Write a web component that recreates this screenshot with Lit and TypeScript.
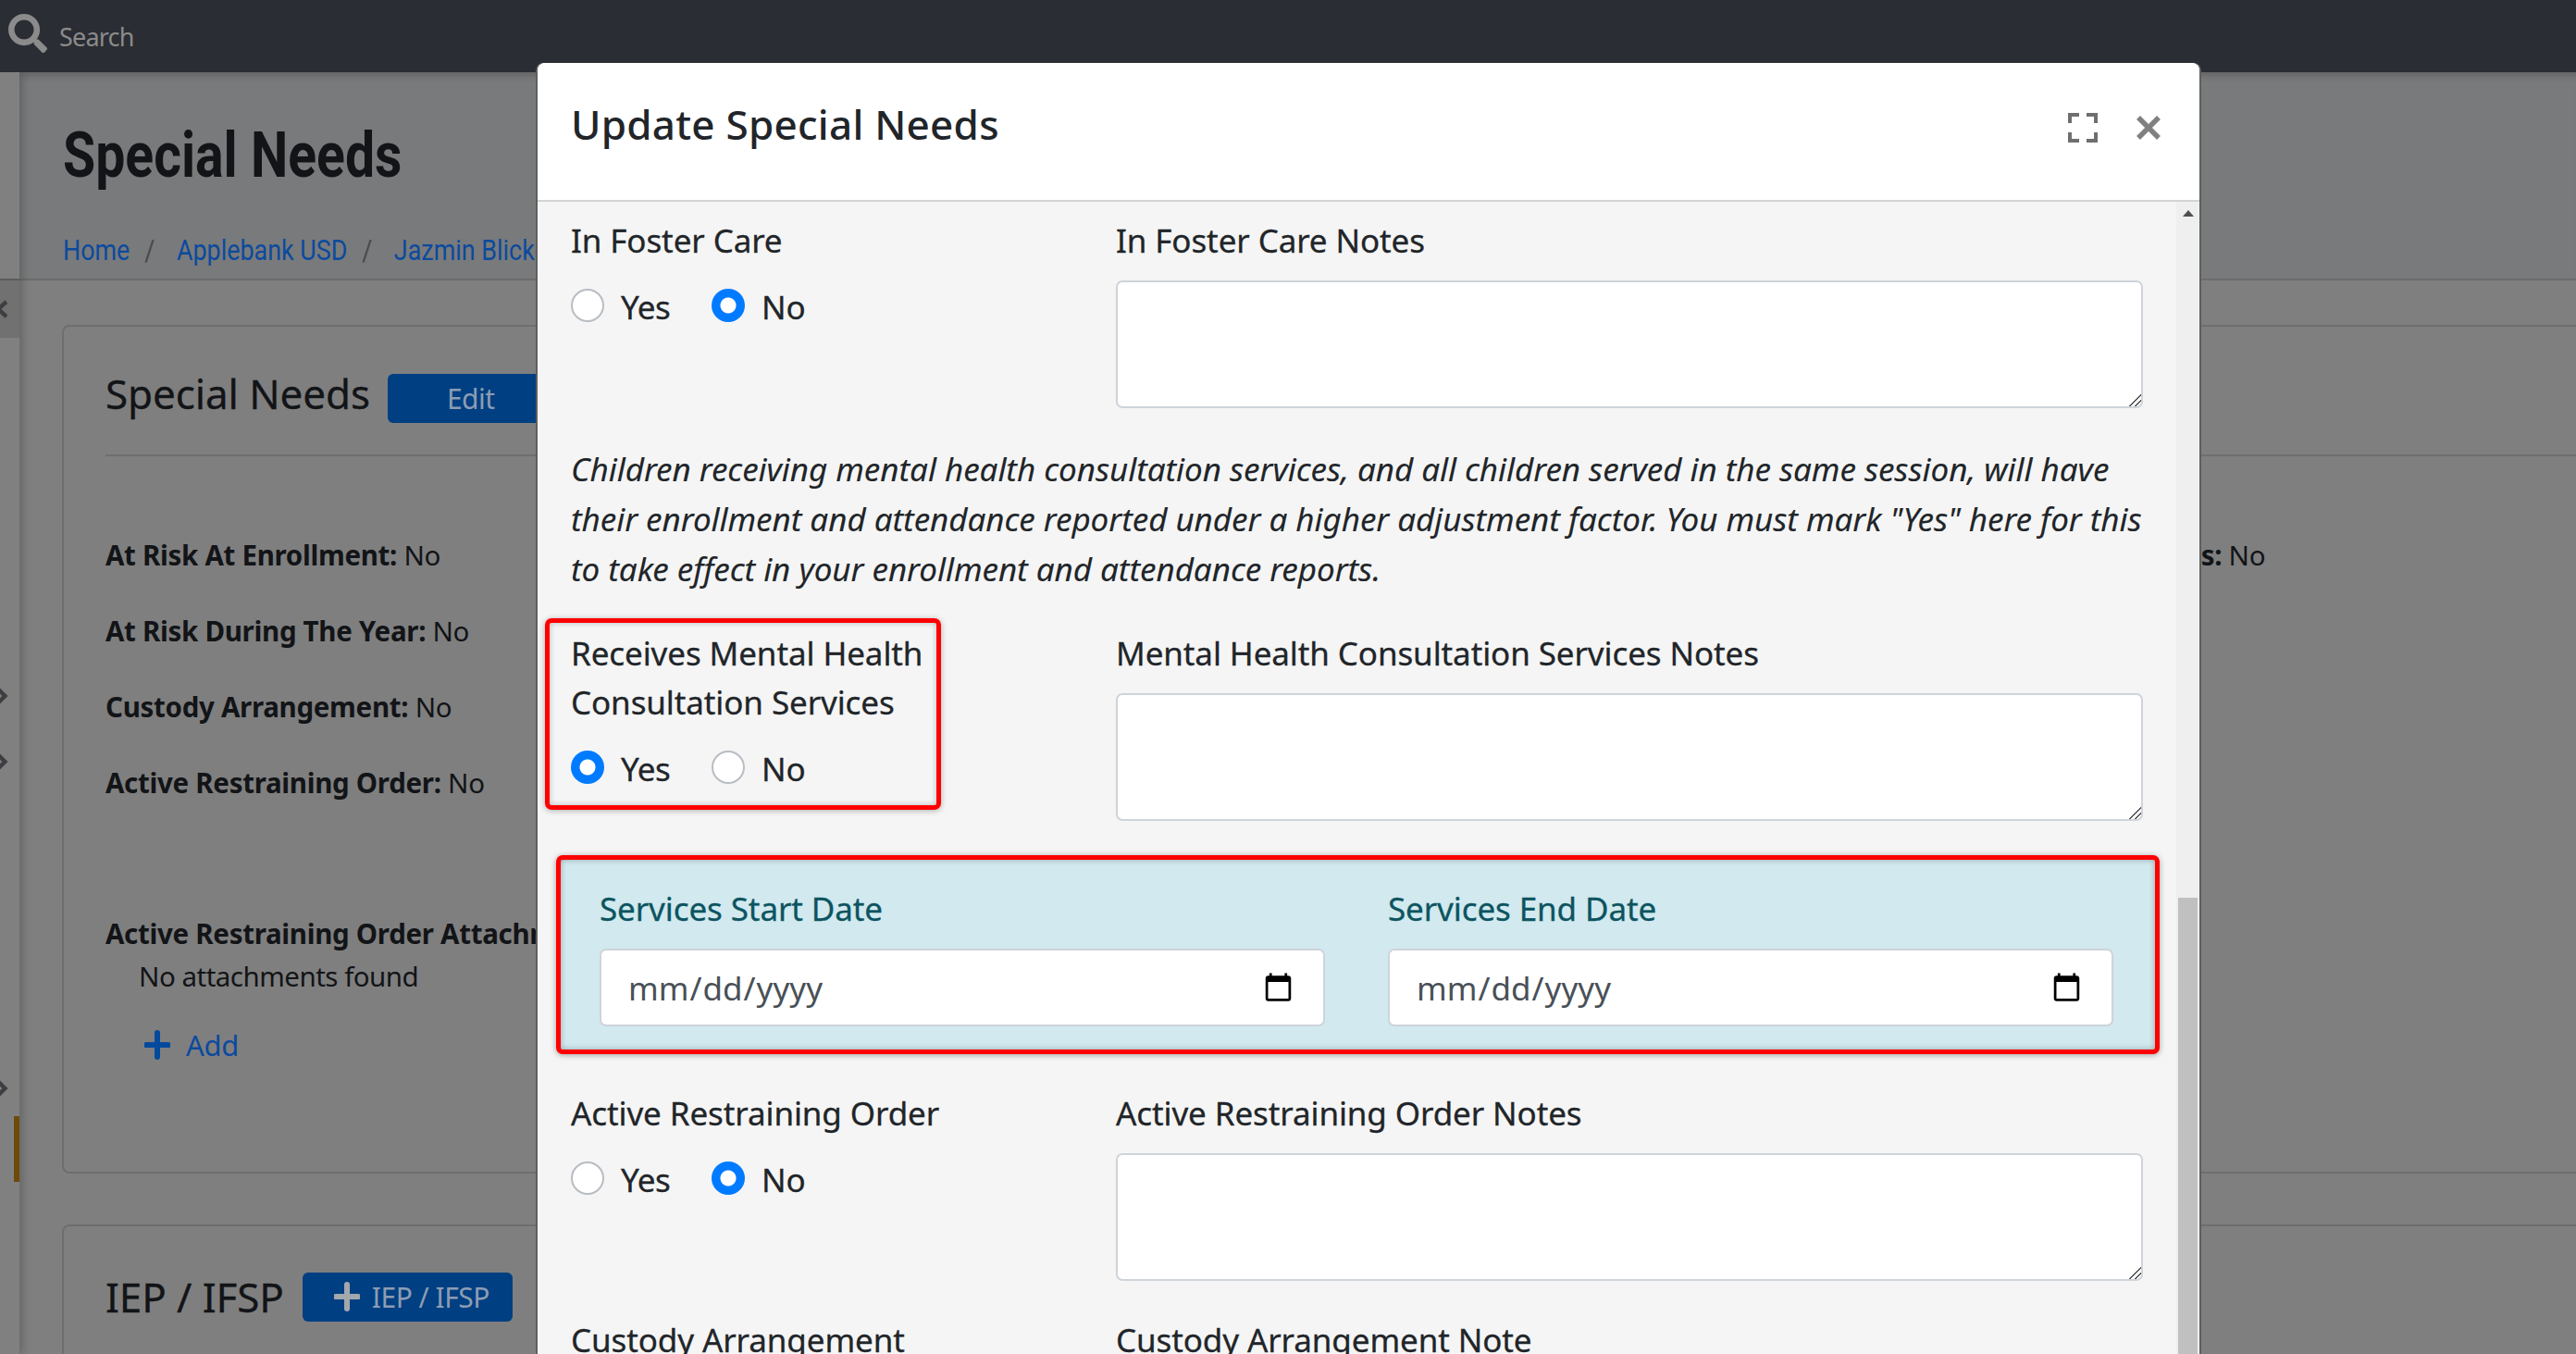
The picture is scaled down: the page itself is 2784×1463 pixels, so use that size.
import { LitElement, html, css } from "lit";
import { customElement } from "lit/decorators.js";

const plus = (cls: string) => html`<svg class=${cls} viewBox="0 0 28 32"><path d="M14 3v26M2 16h24" fill="none" stroke="currentColor" stroke-width="6" stroke-linecap="round"/></svg>`;
const chev = html`<svg class="chev" viewBox="0 0 10 26"><path d="M-4 3l10 10-10 10" fill="none" stroke="currentColor" stroke-width="5"/></svg>`;

@customElement("app-root")
export class AppRoot extends LitElement {
  static styles = css`
    :host { display: block; position: relative; width: 2784px; height: 1463px; overflow: hidden; background: #7f7f7f; font-family: "Noto Sans", sans-serif; color: #121417; }
    .topbar { height: 78px; background: #2a2d33; display: flex; align-items: center; color: #8b8b8b; position: relative; z-index: 1; }
    .search-ico { width: 42px; height: 42px; margin-left: 9px; margin-top: -7px; fill: #8b8b8b; }
    .search-txt { font-size: 27px; letter-spacing: -0.8px; margin-left: 13px; }
    .shell { display: flex; height: 1385px; }
    .rail { width: 21px; flex: none; background: #808080; box-shadow: 4px 0 8px rgba(0,0,0,.18); position: relative; display: flex; flex-direction: column; color: #3d3e42; }
    .rail-top { height: 225px; flex: none; border-bottom: 2px solid #5c5c5c; box-sizing: border-box; }
    .rail-x { height: 62px; flex: none; background: #717171; display: flex; align-items: center; }
    .rail-x svg { width: 8px; height: 22px; }
    .chev { width: 9px; height: 26px; display: block; }
    .c1 { margin-top: 374px; }
    .c2 { margin-top: 45px; }
    .c3 { margin-top: 327px; }
    .amber { width: 6px; height: 71px; margin-left: 15px; margin-top: 17px; background: #6d4a08; }
    .main { flex: 1; min-width: 0; }
    .band { height: 225px; box-sizing: border-box; background: #797a7b; border-bottom: 2px solid #6c6c6c; box-shadow: inset 0 10px 10px -8px rgba(0,0,0,.25); padding: 48px 0 0 47px; }
    h1 { margin: 0; font: 700 68px/84px Roboto, sans-serif; transform: scaleX(.84); transform-origin: left; white-space: nowrap; }
    .crumbs { display: flex; margin-top: 38px; font: 400 32px/44px Roboto, sans-serif; color: #0b4a9e; transform: scaleX(.84); transform-origin: left; white-space: nowrap; }
    .crumbs i { font-style: normal; color: #47484a; margin: 0 28px 0 19px; }
    .card { margin: 48px 0 0 46px; border: 2px solid #6e6e6e; border-right: 0; border-radius: 8px 0 0 8px; height: 917px; box-sizing: border-box; padding: 0 0 0 45px; }
    .card-head { display: flex; align-items: center; height: 140px; border-bottom: 2px solid #6e6e6e; box-sizing: border-box; }
    h2 { margin: 0; font-weight: 400; font-size: 44px; letter-spacing: -0.1px; white-space: nowrap; -webkit-text-stroke: .3px; }
    .card-head h2 { margin-top: 5px; }
    .btn { background: #003f82; color: #8c9db3; border-radius: 6px; display: flex; align-items: center; height: 53px; box-sizing: border-box; font-size: 30px; letter-spacing: -0.5px; }
    .btn-edit { margin-left: 19px; width: 300px; padding-left: 64px; margin-top: 17px; }
    .stats { display: grid; grid-template-columns: 1fr 700px; padding-top: 66px; margin-right: 348px; }
    .stat { font-size: 29.5px; line-height: 82px; height: 82px; letter-spacing: -0.3px; white-space: nowrap; }
    .stat b { font-weight: 700; }
    .stat-r { text-align: right; }
    .attach { margin-top: 99px; font-size: 29.5px; letter-spacing: -0.3px; line-height: 46px; }
    .attach b { white-space: nowrap; display: block; }
    .attach div { padding-left: 36px; letter-spacing: -0.5px; }
    .add { display: flex; align-items: center; color: #0b4a9e; margin: 28px 0 0 42px; font-size: 31px; letter-spacing: -0.3px; height: 46px; }
    .ico-add { width: 28px; height: 32px; margin-right: 17px; color: #034a9c; }
    .card2 { margin-top: 55px; height: 300px; padding-top: 46px; }
    .card2-head { display: flex; align-items: center; }
    .btn-iep { margin-left: 20px; width: 227px; padding-left: 34px; }
    .ico-btn { width: 28px; height: 32px; margin-right: 13px; color: #a3a8ad; }

    .overlay-modal { position: absolute; left: 581px; top: 68px; width: 1796px; height: 1500px; background: #f5f5f5; border-radius: 8px 8px 0 0; box-shadow: 0 0 0 2px #5f5f5f; clip-path: inset(0 -2px 0 -2px round 8px 8px 0 0); color: #212529; z-index: 2; display: flex; flex-direction: column; }
    .m-head { height: 150px; flex: none; box-sizing: border-box; background: #fff; border-bottom: 2px solid #d3d3d3; border-radius: 8px 8px 0 0; display: flex; align-items: center; padding: 0 41px 9px 36px; }
    .m-title { font-size: 44px; font-weight: 500; letter-spacing: 0.25px; flex: 1; margin-top: -7px; }
    .ico-full { width: 32px; height: 32px; color: #6f6f6f; margin-right: 41px; }
    .ico-close { width: 28px; height: 28px; color: #808080; }
    .m-body { flex: 1; display: flex; min-height: 0; }
    .content { flex: 1; min-width: 0; padding: 15px 0 0 36px; font-size: 35px; line-height: 53px; letter-spacing: -0.1px; -webkit-text-stroke: .3px; }
    .scroll { width: 25px; flex: none; background: #efefef; display: flex; flex-direction: column; align-items: center; }
    .arrow { width: 0; height: 0; margin-top: 9px; border: 6px solid transparent; border-top: 0; border-bottom: 7px solid #505050; }
    .thumb { width: 21px; height: 700px; background: #c0c0c0; margin-top: 736px; }
    .row { display: grid; grid-template-columns: 589px 1110px; }
    .row + .row { margin-top: 37px; }
    .lbl { display: block; margin-bottom: 17px; white-space: nowrap; }
    .lbl-flat { margin-bottom: 0; }
    .left { position: relative; }
    .radios { display: flex; align-items: center; margin-top: 26px; height: 36px; }
    .radios .lbl2 { margin: 2px 0 0 18px; }
    .radios .lbl2.y { width: 98px; letter-spacing: -0.4px; }
    input[type=radio] { appearance: none; -webkit-appearance: none; width: 36px; height: 36px; margin: 0; border-radius: 50%; background: #fff; border: 2px solid #b8bdc3; box-sizing: border-box; flex: none; }
    input[type=radio]:checked { border: 0; background: radial-gradient(circle, #fff 0 8px, #007bff 9px); }
    textarea { display: block; box-sizing: border-box; width: 1110px; height: 138px; border: 2px solid #ced4da; border-radius: 7px; background: #fff; padding: 0; margin: 0; outline: 0; font: inherit; }
    textarea::-webkit-resizer { background: linear-gradient(135deg, transparent 0 56%, #555 56% 62%, transparent 62% 76%, #555 76% 82%, transparent 82%); }
    .para { margin: 39px 0 37px; font-style: italic; line-height: 54px; letter-spacing: -0.05px; width: 1700px; white-space: nowrap; -webkit-text-stroke: .1px; }
    .alert { margin: 37px 0 37px -16px; width: 1733px; height: 215px; box-sizing: border-box; border: 5px solid #f00; border-radius: 7px; background: #d1e9ef; box-shadow: 0 1px 6px rgba(0,0,0,.35), inset 0 0 6px rgba(0,0,0,.3); padding: 26px 0 0 42px; display: grid; grid-template-columns: 784px 784px; column-gap: 68px; color: #0c5460; }
    .alert input { display: block; box-sizing: border-box; width: 784px; height: 84px; border: 2px solid #ced4da; border-radius: 7px; background: #fff; color: #495057; padding: 0 29px 0 28px; font: inherit; letter-spacing: 0; margin: 0; outline: 0; -webkit-text-stroke: 0; }
    .redbox { position: absolute; left: -28px; top: -11px; width: 428px; height: 207px; box-sizing: border-box; border: 5px solid #f00; border-radius: 7px; box-shadow: 0 1px 6px rgba(0,0,0,.3), inset 0 0 6px rgba(0,0,0,.25); }
  `;

  radios(yes: boolean) {
    return html`<div class="radios"><input type="radio" .checked=${yes} /><span class="lbl2 y">Yes</span><input type="radio" .checked=${!yes} /><span class="lbl2">No</span></div>`;
  }

  render() {
    return html`
      <div class="topbar">
        <svg class="search-ico" viewBox="0 0 512 512"><path d="M505 442.7L405.3 343c-4.5-4.5-10.6-7-17-7H372c27.6-35.3 44-79.7 44-128C416 93.1 322.9 0 208 0S0 93.1 0 208s93.1 208 208 208c48.3 0 92.7-16.4 128-44v16.3c0 6.4 2.5 12.5 7 17l99.7 99.7c9.4 9.4 24.6 9.4 33.9 0l28.3-28.3c9.4-9.4 9.4-24.6.1-34zM208 336c-70.7 0-128-57.2-128-128 0-70.7 57.2-128 128-128 70.7 0 128 57.2 128 128 0 70.7-57.2 128-128 128z"/></svg>
        <span class="search-txt">Search</span>
      </div>
      <div class="shell">
        <div class="rail">
          <div class="rail-top"></div>
          <div class="rail-x"><svg viewBox="0 0 8 22"><path d="M7 3L-2 11l9 8" fill="none" stroke="currentColor" stroke-width="4.5"/></svg></div>
          <div class="c1">${chev}</div>
          <div class="c2">${chev}</div>
          <div class="c3">${chev}</div>
          <div class="amber"></div>
        </div>
        <div class="main">
          <div class="band">
            <h1>Special Needs</h1>
            <div class="crumbs"><span>Home</span><i>/</i><span>Applebank USD</span><i>/</i><span>Jazmin Blicker</span></div>
          </div>
          <div class="card">
            <div class="card-head"><h2>Special Needs</h2><div class="btn btn-edit">Edit</div></div>
            <div class="stats">
              <div class="stat"><b>At Risk At Enrollment:</b> No</div>
              <div class="stat stat-r"><b>Receives Mental Health Consultation Services:</b> No</div>
              <div class="stat"><b>At Risk During The Year:</b> No</div><div></div>
              <div class="stat"><b>Custody Arrangement:</b> No</div><div></div>
              <div class="stat"><b>Active Restraining Order:</b> No</div><div></div>
            </div>
            <div class="attach"><b>Active Restraining Order Attachments</b><div>No attachments found</div></div>
            <div class="add">${plus("ico-add")}<span>Add</span></div>
          </div>
          <div class="card card2">
            <div class="card2-head"><h2>IEP / IFSP</h2><div class="btn btn-iep">${plus("ico-btn")}<span>IEP / IFSP</span></div></div>
          </div>
        </div>
      </div>

      <div class="overlay-modal">
        <div class="m-head">
          <div class="m-title">Update Special Needs</div>
          <svg class="ico-full" viewBox="0 0 32 32"><path d="M2 11V2h10M20 2h10v9M30 21v9H20M12 30H2v-9" fill="none" stroke="currentColor" stroke-width="4"/></svg>
          <svg class="ico-close" viewBox="0 0 28 28"><path d="M3 3l22 22M25 3L3 25" fill="none" stroke="currentColor" stroke-width="5.5"/></svg>
        </div>
        <div class="m-body">
          <div class="content">
            <div class="row">
              <div class="left"><span class="lbl">In Foster Care</span>${this.radios(false)}</div>
              <div><span class="lbl">In Foster Care Notes</span><textarea></textarea></div>
            </div>
            <div class="para">Children receiving mental health consultation services, and all children served in the same session, will have<br />their enrollment and attendance reported under a higher adjustment factor. You must mark "Yes" here for this<br />to take effect in your enrollment and attendance reports.</div>
            <div class="row">
              <div class="left"><div class="redbox"></div><span class="lbl lbl-flat">Receives Mental Health<br />Consultation Services</span>${this.radios(true)}</div>
              <div><span class="lbl">Mental Health Consultation Services Notes</span><textarea></textarea></div>
            </div>
            <div class="alert">
              <div><span class="lbl">Services Start Date</span><input type="date" /></div>
              <div><span class="lbl">Services End Date</span><input type="date" /></div>
            </div>
            <div class="row">
              <div class="left"><span class="lbl">Active Restraining Order</span>${this.radios(false)}</div>
              <div><span class="lbl">Active Restraining Order Notes</span><textarea></textarea></div>
            </div>
            <div class="row">
              <div class="left"><span class="lbl">Custody Arrangement</span></div>
              <div><span class="lbl">Custody Arrangement Note</span></div>
            </div>
          </div>
          <div class="scroll"><div class="arrow"></div><div class="thumb"></div></div>
        </div>
      </div>
    `;
  }
}
